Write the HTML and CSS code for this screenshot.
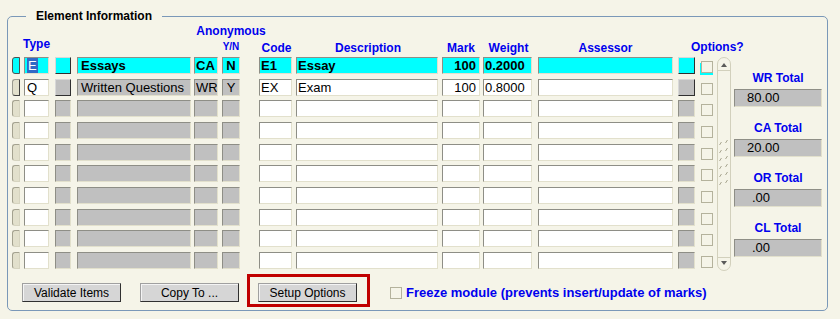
FILE: index.html
```html
<!DOCTYPE html>
<html lang="en">
<head>
  <meta charset="UTF-8">
  <meta name="viewport" content="width=device-width, initial-scale=1.0">
  <title>Element Information</title>
  <link rel="stylesheet" href="styles.css">
</head>
<body>
  <fieldset class="panel">
    <legend>Element Information</legend>

    <div class="main">
      <div class="table">
        <div class="head">
          <span class="anon">Anonymous</span>
          <span class="lbl type-lbl c-type">Type</span>
          <span class="lbl yn-lbl c-yn">Y/N</span>
          <span class="lbl code-lbl c-code">Code</span>
          <span class="lbl desc-lbl c-desc">Description</span>
          <span class="lbl mark-lbl c-mark">Mark</span>
          <span class="lbl wt-lbl c-wt">Weight</span>
          <span class="lbl ass-lbl c-ass">Assessor</span>
          <span class="lbl opt-lbl">Options?</span>
        </div>

        <div class="row">
          <span class="ind hot up"></span>
          <span class="cell c-type hot plain"><span class="sel">E</span></span>
          <span class="cell c-btn hot up"></span>
          <span class="cell c-name hot">Essays</span>
          <span class="cell c-ca hot">CA</span>
          <span class="cell c-yn hot">N</span>
          <span class="cell c-code hot">E1</span>
          <span class="cell c-desc hot">Essay</span>
          <span class="cell c-mark hot">100</span>
          <span class="cell c-wt hot">0.2000</span>
          <span class="cell c-ass hot"></span>
          <span class="cell c-btn2 hot up"></span>
          <span class="chk focus"></span>
        </div>
        <div class="row">
          <span class="ind up"></span>
          <span class="cell c-type white">Q</span>
          <span class="cell c-btn gray up"></span>
          <span class="cell c-name gray">Written Questions</span>
          <span class="cell c-ca gray">WR</span>
          <span class="cell c-yn gray">Y</span>
          <span class="cell c-code white">EX</span>
          <span class="cell c-desc white">Exam</span>
          <span class="cell c-mark white">100</span>
          <span class="cell c-wt white">0.8000</span>
          <span class="cell c-ass white"></span>
          <span class="cell c-btn2 gray up"></span>
          <span class="chk"></span>
        </div>
        <div class="row">
          <span class="ind"></span><span class="cell c-type white"></span><span class="cell c-btn gray"></span>
          <span class="cell c-name gray"></span><span class="cell c-ca gray"></span><span class="cell c-yn gray"></span>
          <span class="cell c-code white"></span><span class="cell c-desc white"></span><span class="cell c-mark white"></span>
          <span class="cell c-wt white"></span><span class="cell c-ass white"></span><span class="cell c-btn2 gray"></span>
          <span class="chk"></span>
        </div>
        <div class="row">
          <span class="ind"></span><span class="cell c-type white"></span><span class="cell c-btn gray"></span>
          <span class="cell c-name gray"></span><span class="cell c-ca gray"></span><span class="cell c-yn gray"></span>
          <span class="cell c-code white"></span><span class="cell c-desc white"></span><span class="cell c-mark white"></span>
          <span class="cell c-wt white"></span><span class="cell c-ass white"></span><span class="cell c-btn2 gray"></span>
          <span class="chk"></span>
        </div>
        <div class="row">
          <span class="ind"></span><span class="cell c-type white"></span><span class="cell c-btn gray"></span>
          <span class="cell c-name gray"></span><span class="cell c-ca gray"></span><span class="cell c-yn gray"></span>
          <span class="cell c-code white"></span><span class="cell c-desc white"></span><span class="cell c-mark white"></span>
          <span class="cell c-wt white"></span><span class="cell c-ass white"></span><span class="cell c-btn2 gray"></span>
          <span class="chk"></span>
        </div>
        <div class="row">
          <span class="ind"></span><span class="cell c-type white"></span><span class="cell c-btn gray"></span>
          <span class="cell c-name gray"></span><span class="cell c-ca gray"></span><span class="cell c-yn gray"></span>
          <span class="cell c-code white"></span><span class="cell c-desc white"></span><span class="cell c-mark white"></span>
          <span class="cell c-wt white"></span><span class="cell c-ass white"></span><span class="cell c-btn2 gray"></span>
          <span class="chk"></span>
        </div>
        <div class="row">
          <span class="ind"></span><span class="cell c-type white"></span><span class="cell c-btn gray"></span>
          <span class="cell c-name gray"></span><span class="cell c-ca gray"></span><span class="cell c-yn gray"></span>
          <span class="cell c-code white"></span><span class="cell c-desc white"></span><span class="cell c-mark white"></span>
          <span class="cell c-wt white"></span><span class="cell c-ass white"></span><span class="cell c-btn2 gray"></span>
          <span class="chk"></span>
        </div>
        <div class="row">
          <span class="ind"></span><span class="cell c-type white"></span><span class="cell c-btn gray"></span>
          <span class="cell c-name gray"></span><span class="cell c-ca gray"></span><span class="cell c-yn gray"></span>
          <span class="cell c-code white"></span><span class="cell c-desc white"></span><span class="cell c-mark white"></span>
          <span class="cell c-wt white"></span><span class="cell c-ass white"></span><span class="cell c-btn2 gray"></span>
          <span class="chk"></span>
        </div>
        <div class="row">
          <span class="ind"></span><span class="cell c-type white"></span><span class="cell c-btn gray"></span>
          <span class="cell c-name gray"></span><span class="cell c-ca gray"></span><span class="cell c-yn gray"></span>
          <span class="cell c-code white"></span><span class="cell c-desc white"></span><span class="cell c-mark white"></span>
          <span class="cell c-wt white"></span><span class="cell c-ass white"></span><span class="cell c-btn2 gray"></span>
          <span class="chk"></span>
        </div>
        <div class="row">
          <span class="ind"></span><span class="cell c-type white"></span><span class="cell c-btn gray"></span>
          <span class="cell c-name gray"></span><span class="cell c-ca gray"></span><span class="cell c-yn gray"></span>
          <span class="cell c-code white"></span><span class="cell c-desc white"></span><span class="cell c-mark white"></span>
          <span class="cell c-wt white"></span><span class="cell c-ass white"></span><span class="cell c-btn2 gray"></span>
          <span class="chk"></span>
        </div>
      </div>

      <div class="scroll">
        <span class="arrow-up"></span>
        <div class="track">
          <svg class="grip" width="10" height="48" viewBox="0 0 10 48">
            <g stroke="#a8a690" stroke-width="1">
              <line x1="0.5" y1="5" x2="2.5" y2="2"/>
              <line x1="6.5" y1="3" x2="8.5" y2="0"/>
              <line x1="0.5" y1="13" x2="2.5" y2="10"/>
              <line x1="6.5" y1="11" x2="8.5" y2="8"/>
              <line x1="0.5" y1="21" x2="2.5" y2="18"/>
              <line x1="6.5" y1="19" x2="8.5" y2="16"/>
              <line x1="0.5" y1="29" x2="2.5" y2="26"/>
              <line x1="6.5" y1="27" x2="8.5" y2="24"/>
              <line x1="0.5" y1="37" x2="2.5" y2="34"/>
              <line x1="6.5" y1="35" x2="8.5" y2="32"/>
              <line x1="0.5" y1="45" x2="2.5" y2="42"/>
              <line x1="6.5" y1="43" x2="8.5" y2="40"/>
            </g>
          </svg>
        </div>
        <span class="arrow-down"></span>
      </div>

      <div class="totals">
        <div class="total">
          <div class="tot-lbl">WR Total</div>
          <div class="tot-field">80.00</div>
        </div>
        <div class="total">
          <div class="tot-lbl">CA Total</div>
          <div class="tot-field">20.00</div>
        </div>
        <div class="total">
          <div class="tot-lbl">OR Total</div>
          <div class="tot-field short">.00</div>
        </div>
        <div class="total">
          <div class="tot-lbl">CL Total</div>
          <div class="tot-field short">.00</div>
        </div>
      </div>
    </div>

    <div class="actions">
      <button class="btn">Validate Items</button>
      <button class="btn gap">Copy To ...</button>
      <span class="mark-box"><button class="btn">Setup Options</button></span>
      <label class="freeze"><span class="chk"></span>Freeze module (prevents insert/update of marks)</label>
    </div>
  </fieldset>
</body>
</html>
```

FILE: styles.css
```css
body {
  margin: 0;
  background: #f5f4e8;
  font-family: "Liberation Sans", Arial, sans-serif;
  color: #000;
}
.panel {
  box-sizing: border-box;
  width: 821px;
  margin: 9px 0 0 7px;
  padding: 0 5px 3px 4px;
  border: 1px solid #7a98b8;
  border-radius: 5px;
  min-inline-size: 0;
}
.panel legend {
  margin-left: 14px;
  padding: 0 10px;
  font-size: 12px;
  font-weight: bold;
  line-height: 15px;
}
.main {
  display: flex;
  align-items: flex-start;
}
.table {
  width: 705px;
}
.head,
.row {
  display: grid;
  grid-template-columns: 12px 31px 22px 117px 28px 37px 37px 146px 41px 55px 140px 23px 16px;
}
.head {
  grid-template-rows: 16px 17px;
  color: #0000ee;
  font-size: 12px;
  font-weight: bold;
  line-height: 15px;
  white-space: nowrap;
}
.anon {
  grid-row: 1;
  grid-column: 6;
  justify-self: start;
  width: 18px;
  display: flex;
  justify-content: center;
}
.lbl {
  grid-row: 2;
  display: flex;
  justify-content: center;
  align-self: end;
  margin-bottom: 1px;
}
.type-lbl { grid-column: 2; margin-bottom: 5px; }
.yn-lbl { grid-column: 6; font-size: 10px; margin-bottom: 3px; }
.code-lbl { grid-column: 7; }
.desc-lbl { grid-column: 8; }
.mark-lbl { grid-column: 9; }
.wt-lbl { grid-column: 10; }
.ass-lbl { grid-column: 11; }
.opt-lbl {
  grid-column: 12 / span 2;
  justify-content: flex-start;
  padding-left: 13px;
  margin-bottom: 2px;
}
.row {
  height: 17px;
  margin-bottom: 4.67px;
}
.row:last-child {
  margin-bottom: 0;
}
.cell {
  box-sizing: border-box;
  height: 17px;
  padding: 0 2px;
  border: 1px solid;
  border-color: #8e8e86 #e2e0cc #e2e0cc #8e8e86;
  font-size: 13px;
  line-height: 15px;
  white-space: nowrap;
  overflow: hidden;
}
.white { background: #fff; }
.gray { background: #c0c0c0; }
.hot {
  background: #00ffff;
  font-weight: bold;
}
.plain { font-weight: normal; }
.up {
  border-color: #d8d8d8 #303030 #303030 #d8d8d8;
}
.sel {
  display: inline-block;
  padding: 0 1px;
  background: #3169c6;
  color: #fff;
}
.ind {
  box-sizing: border-box;
  width: 8px;
  height: 17px;
  background: #e2e0cc;
  border: 1px solid;
  border-color: #a4a290 #d6d4c0 #d6d4c0 #a4a290;
  border-radius: 3px 0 0 3px;
}
.ind.up {
  border-color: #9a9a90 #404040 #404040 #9a9a90;
}
.ind.hot {
  background: #00ffff;
  border-color: #505050;
}
.c-type { width: 25px; }
.c-btn { width: 16px; }
.c-name { width: 114px; padding-left: 3px; }
.c-ca { width: 24px; padding-left: 1px; }
.c-yn { width: 18px; text-align: center; padding: 0; }
.c-code { width: 33px; padding-left: 1px; }
.c-desc { width: 142px; padding-left: 1px; }
.c-mark { width: 38px; text-align: right; padding-right: 3px; }
.c-wt { width: 49px; padding-left: 1px; }
.c-ass { width: 135px; }
.c-btn2 { width: 17px; }
.chk {
  box-sizing: border-box;
  display: inline-block;
  width: 12px;
  height: 12px;
  margin-top: 4px;
  border: 1px solid #b4b29c;
  background: #f5f4e8;
}
.chk.focus {
  box-shadow: 0 2px 0 #00ffff, -1px 2px 0 #00ffff;
}
.scroll {
  box-sizing: border-box;
  display: flex;
  flex-direction: column;
  align-items: center;
  width: 14px;
  height: 214px;
  margin-top: 33px;
  border: 1px solid #d2d0bc;
  border-radius: 7px;
}
.arrow-up,
.arrow-down {
  width: 0;
  height: 0;
  border-left: 3px solid transparent;
  border-right: 3px solid transparent;
}
.arrow-up {
  margin-top: 5px;
  border-bottom: 4px solid #5a5a5a;
}
.arrow-down {
  margin-bottom: 5px;
  border-top: 4px solid #5a5a5a;
}
.track {
  flex: 1;
  align-self: stretch;
  margin: 3px 0;
  border-top: 1px solid #d2d0bc;
  border-bottom: 1px solid #d2d0bc;
  padding-top: 69px;
  display: flex;
  justify-content: center;
}
.grip {
  display: block;
}
.totals {
  width: 88px;
  margin-left: 3px;
  padding-top: 47px;
}
.total {
  margin-bottom: 14px;
}
.tot-lbl {
  color: #0000ee;
  font-size: 12px;
  font-weight: bold;
  line-height: 15px;
  text-align: center;
  margin-bottom: 3px;
}
.tot-field {
  box-sizing: border-box;
  height: 18px;
  padding-left: 12px;
  background: #c0c0c0;
  border: 1px solid;
  border-color: #8e8e86 #e2e0cc #e2e0cc #8e8e86;
  font-size: 13px;
  line-height: 16px;
}
.tot-field.short {
  padding-left: 17px;
}
.actions {
  display: flex;
  align-items: flex-start;
  margin-top: 3px;
  padding-left: 10px;
}
.btn {
  box-sizing: border-box;
  width: 99px;
  height: 19px;
  margin-top: 9px;
  padding: 0;
  background: #d6d6d6;
  border: 1px solid;
  border-color: #a0a0a0 #303030 #303030 #a0a0a0;
  box-shadow: inset 1px 1px 0 #f4f4f4;
  font-family: "Liberation Sans", Arial, sans-serif;
  font-size: 12px;
  color: #000;
}
.btn.gap {
  margin-left: 19px;
}
.mark-box {
  margin-left: 8px;
  padding: 6px 10px 2px 8px;
  border: 3px solid #c00000;
}
.mark-box .btn {
  display: block;
  margin-top: 0;
}
.freeze {
  display: flex;
  align-items: center;
  gap: 4px;
  margin-left: 20px;
  margin-top: 12px;
  color: #0000ee;
  font-size: 13px;
  font-weight: bold;
  line-height: 14px;
}
.freeze .chk {
  margin-top: 0;
}
```
